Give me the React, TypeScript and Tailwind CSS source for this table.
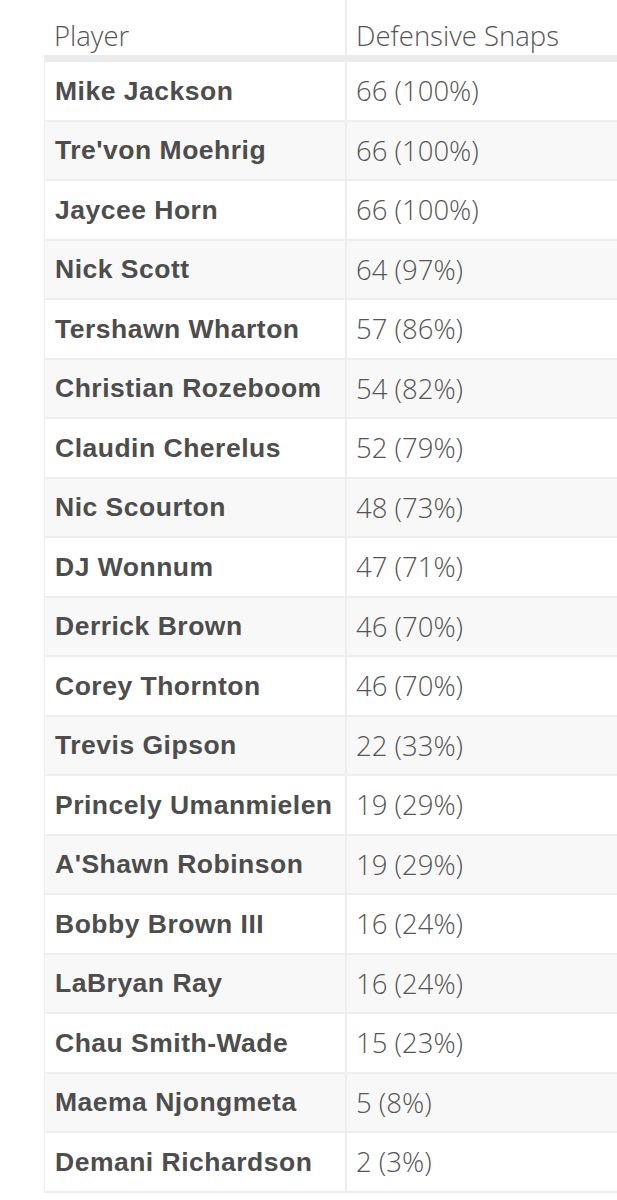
const rows: [string, string][] = [
    ['Mike Jackson', '66 (100%)'],
    ["Tre'von Moehrig", '66 (100%)'],
    ['Jaycee Horn', '66 (100%)'],
    ['Nick Scott', '64 (97%)'],
    ['Tershawn Wharton', '57 (86%)'],
    ['Christian Rozeboom', '54 (82%)'],
    ['Claudin Cherelus', '52 (79%)'],
    ['Nic Scourton', '48 (73%)'],
    ['DJ Wonnum', '47 (71%)'],
    ['Derrick Brown', '46 (70%)'],
    ['Corey Thornton', '46 (70%)'],
    ['Trevis Gipson', '22 (33%)'],
    ['Princely Umanmielen', '19 (29%)'],
    ["A'Shawn Robinson", '19 (29%)'],
    ['Bobby Brown III', '16 (24%)'],
    ['LaBryan Ray', '16 (24%)'],
    ['Chau Smith-Wade', '15 (23%)'],
    ['Maema Njongmeta', '5 (8%)'],
    ['Demani Richardson', '2 (3%)'],
];

export default function App() {
    return (
        <div className="w-[617px] h-[1200px] overflow-hidden bg-white">
            <div className="ml-[44px] w-[620px]">
                {/* header */}
                <div className="flex h-[62px] border-b-[7px] border-[#ebebeb] font-['Open_Sans',sans-serif] font-light text-[27.5px] text-[#555]">
                    <div className="w-[301px] pl-[10px] pt-[18px] leading-[36px] whitespace-nowrap">Player</div>
                    <div className="flex-1 border-l-2 border-[#eeeeee] pl-[9px] pt-[18px] leading-[36px] whitespace-nowrap">
                        Defensive Snaps
                    </div>
                </div>
                {rows.map(([name, snaps], i) => (
                    <div
                        key={name}
                        className={`flex h-[59.5px] border-b-2 border-l border-[#eeeeee] ${i % 2 === 1 ? 'bg-[#f8f8f8]' : 'bg-white'}`}
                    >
                        <div className="w-[300px] pl-[10px] pt-[2px] flex items-center whitespace-nowrap font-['Liberation_Sans',Arial,sans-serif] font-bold text-[26.5px] tracking-[0.5px] text-[#4d4d4d]">
                            {name}
                        </div>
                        <div className="flex-1 border-l-2 border-[#eeeeee] pl-[9px] flex items-center whitespace-nowrap font-['Open_Sans',sans-serif] font-light text-[27.5px] text-[#555]">
                            {snaps}
                        </div>
                    </div>
                ))}
            </div>
        </div>
    );
}
